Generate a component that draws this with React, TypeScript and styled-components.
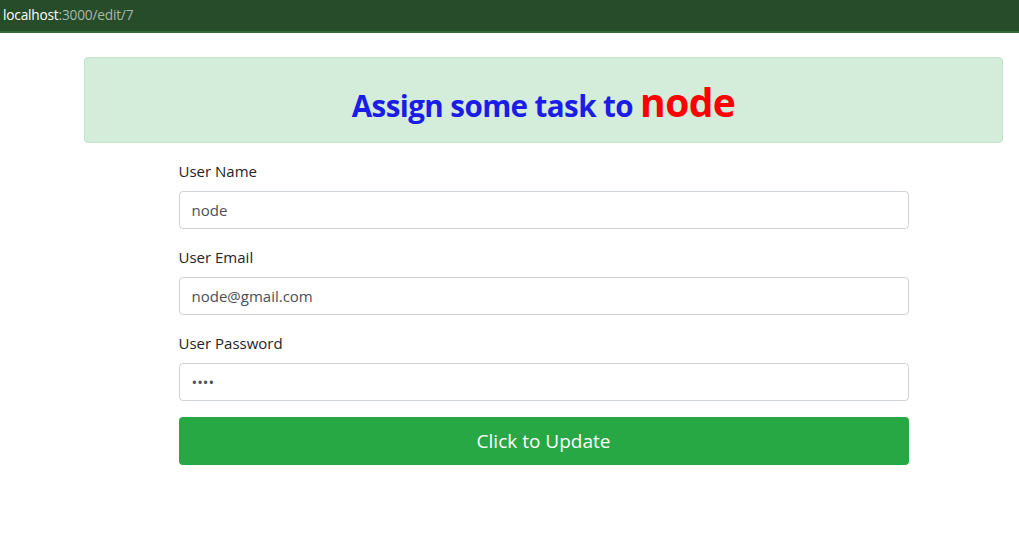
import React from "react";
import styled, { createGlobalStyle } from "styled-components";

const Global = createGlobalStyle`
  html, body { margin: 0; padding: 0; background: #fff; }
  body { font-family: "Open Sans", "Noto Sans", Arial, sans-serif; color: #212529; }
  * { box-sizing: border-box; }
`;

const AddressBar = styled.div`
  height: 33px;
  background: #264c2a;
  border-bottom: 2px solid #2f6a37;
  display: flex;
  align-items: center;
  padding: 0 0 2px 3px;
  font-size: 13.7px;
  letter-spacing: -0.2px;
`;

const Host = styled.span`
  color: #ffffff;
`;

const Path = styled.span`
  color: #a9b8aa;
`;

const Page = styled.main`
  display: flex;
  flex-direction: column;
  align-items: center;
  padding: 24px 16px 0 84px;
`;

const Alert = styled.div`
  width: 919px;
  height: 86px;
  background: #d4edda;
  border: 1px solid #c3e6cb;
  border-radius: 4px;
  display: flex;
  align-items: center;
  justify-content: center;
  margin-bottom: 16px;
  padding-top: 4px;
`;

const Heading = styled.h2`
  margin: 0;
  font-weight: 700;
  font-size: 29.6px;
  letter-spacing: -0.6px;
  color: #1c1ce8;
  line-height: 1.2;
`;

const Name = styled.span`
  color: #ff0000;
  font-size: 39px;
`;

const Form = styled.form`
  width: 730px;
  display: flex;
  flex-direction: column;
`;

const Group = styled.div`
  display: flex;
  flex-direction: column;
  margin-bottom: 16px;
`;

const Label = styled.label`
  font-size: 15px;
  line-height: 24px;
  margin-bottom: 8px;
  color: #212529;
`;

const Input = styled.input`
  height: 38px;
  border: 1px solid #ced4da;
  border-radius: 4px;
  padding: 6px 12px;
  font-family: inherit;
  font-size: 15px;
  color: #495057;
  background: #fff;
  outline: none;
`;

const Button = styled.button`
  height: 48px;
  border: none;
  border-radius: 4px;
  background: #28a745;
  color: #fff;
  font-family: inherit;
  font-size: 19px;
  cursor: pointer;
`;

export default function App() {
  return (
    <>
      <Global />
      <AddressBar>
        <Host>localhost</Host>
        <Path>:3000/edit/7</Path>
      </AddressBar>
      <Page>
        <Alert>
          <Heading>
            Assign some task to <Name>node</Name>
          </Heading>
        </Alert>
        <Form onSubmit={(e) => e.preventDefault()}>
          <Group>
            <Label>User Name</Label>
            <Input type="text" defaultValue="node" />
          </Group>
          <Group>
            <Label>User Email</Label>
            <Input type="email" defaultValue="node@gmail.com" />
          </Group>
          <Group>
            <Label>User Password</Label>
            <Input type="password" defaultValue="node" />
          </Group>
          <Button type="submit">Click to Update</Button>
        </Form>
      </Page>
    </>
  );
}
